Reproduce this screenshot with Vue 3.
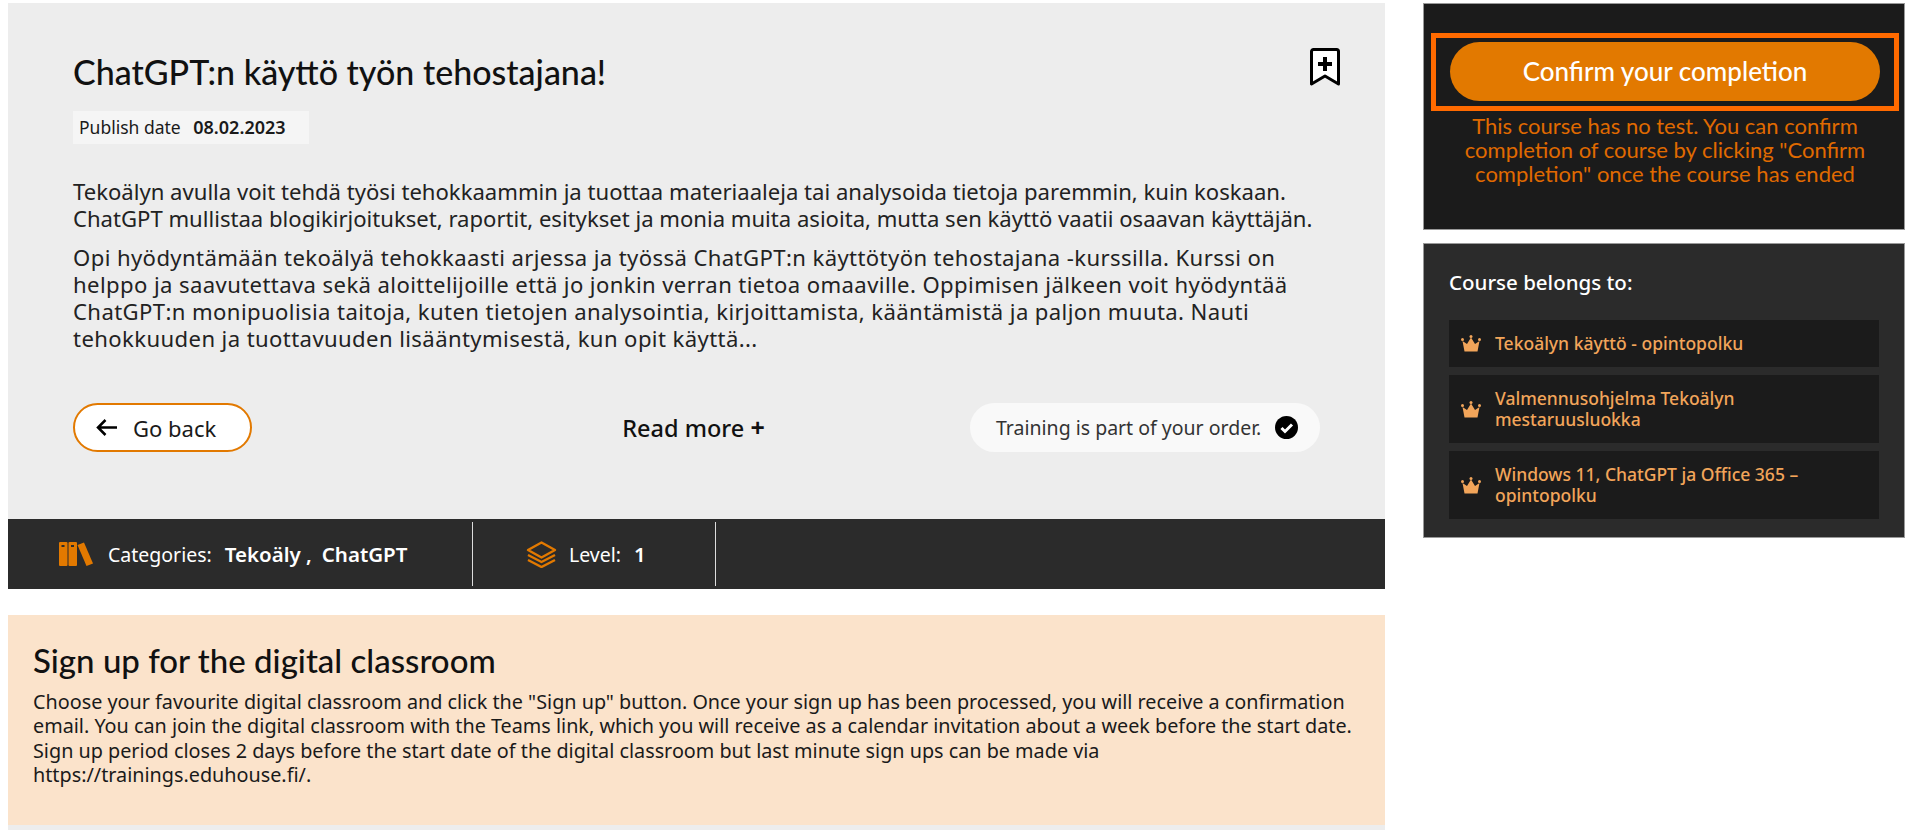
<template>
  <div class="page">
    <main class="main">
      <section class="course">
        <div class="course-body">
          <div class="head">
            <h1>ChatGPT:n käyttö työn tehostajana!</h1>
            <svg class="bookmark" width="32" height="39" viewBox="0 0 32 39">
              <path d="M2.500 3.500a2 2 0 0 1 2-2h23a2 2 0 0 1 2 2v32.500L16 28 2.500 36z" fill="#fff" stroke="#000" stroke-width="3" stroke-linejoin="round" />
              <path d="M14 9h4v5h5v4h-5v5h-4v-5H9v-4h5z" fill="#000" />
            </svg>
          </div>
          <div class="publish">Publish date <b>08.02.2023</b></div>
          <p class="lead">Tekoälyn avulla voit tehdä työsi tehokkaammin ja tuottaa materiaaleja tai analysoida tietoja paremmin, kuin koskaan. ChatGPT mullistaa blogikirjoitukset, raportit, esitykset ja monia muita asioita, mutta sen käyttö vaatii osaavan käyttäjän.</p>
          <p class="lead second">Opi hyödyntämään tekoälyä tehokkaasti arjessa ja työssä ChatGPT:n käyttötyön tehostajana -kurssilla. Kurssi on helppo ja saavutettava sekä aloittelijoille että jo jonkin verran tietoa omaaville. Oppimisen jälkeen voit hyödyntää ChatGPT:n monipuolisia taitoja, kuten tietojen analysointia, kirjoittamista, kääntämistä ja paljon muuta. Nauti tehokkuuden ja tuottavuuden lisääntymisestä, kun opit käyttä...</p>
          <div class="actions">
            <button class="back">
              <svg width="22" height="19" viewBox="0 0 22 19">
                <path d="M22 9.500H3M10.500 2 3 9.500l7.500 7.500" fill="none" stroke="#000" stroke-width="2.500" />
              </svg>
              Go back
            </button>
            <div class="more">Read more <span>+</span></div>
            <div class="ordered">
              Training is part of your order.
              <svg width="23" height="23" viewBox="0 0 23 23">
                <circle cx="11.500" cy="11.500" r="11.500" fill="#000" />
                <path d="m6.500 12 3.500 3.500 7-7" fill="none" stroke="#fff" stroke-width="3" />
              </svg>
            </div>
          </div>
        </div>
        <div class="meta">
          <div class="meta-cell cats">
            <svg width="34" height="24" viewBox="0 0 34 24">
              <rect x="0" y="0" width="8.500" height="24" rx="1" fill="#e27900" />
              <rect x="9.500" y="0" width="8.500" height="24" rx="1" fill="#e27900" />
              <path d="m18.500 3 6.500-2.500L34 21.500 27.500 24z" fill="#e27900" />
              <rect x="2.500" y="3" width="3" height="2" fill="#2b2b2b" />
              <rect x="12" y="3" width="3" height="2" fill="#2b2b2b" />
            </svg>
            <span>Categories:</span>
            <b>Tekoäly ,</b>
            <b>ChatGPT</b>
          </div>
          <div class="meta-cell level">
            <svg width="31" height="27" viewBox="0 0 31 27">
              <path d="M15.500 1.500 29 9l-13.500 7.500L2 9z" fill="none" stroke="#e27900" stroke-width="2.400" stroke-linejoin="round" />
              <path d="m2 14 13.500 7L29 14M2 19l13.500 7L29 19" fill="none" stroke="#e27900" stroke-width="2.400" />
            </svg>
            <span>Level:</span>
            <b>1</b>
          </div>
        </div>
      </section>

      <section class="signup">
        <h2>Sign up for the digital classroom</h2>
        <p>Choose your favourite digital classroom and click the "Sign up" button. Once your sign up has been processed, you will receive a confirmation email. You can join the digital classroom with the Teams link, which you will receive as a calendar invitation about a week before the start date. Sign up period closes 2 days before the start date of the digital classroom but last minute sign ups can be made via https://trainings.eduhouse.fi/.</p>
      </section>
      <div class="strip"></div>
    </main>

    <aside class="side">
      <section class="confirm">
        <div class="confirm-frame">
          <button class="confirm-btn">Confirm your completion</button>
        </div>
        <p>This course has no test. You can confirm completion of course by clicking "Confirm completion" once the course has ended</p>
      </section>
      <section class="belongs">
        <h3>Course belongs to:</h3>
        <a v-for="path in paths" :key="path" class="path">
          <svg width="20" height="17" viewBox="0 0 20 17">
            <path d="M3.500 16.500 1.500 6l4.500 3L10 2.500 14 9l4.500-3-2 10.500z" fill="#f2a55a" />
            <circle cx="1.500" cy="4.500" r="1.500" fill="#f2a55a" />
            <circle cx="10" cy="1.500" r="1.500" fill="#f2a55a" />
            <circle cx="18.500" cy="4.500" r="1.500" fill="#f2a55a" />
          </svg>
          <span>{{ path }}</span>
        </a>
      </section>
    </aside>
  </div>
</template>

<script setup>
const paths = [
  'Tekoälyn käyttö - opintopolku',
  'Valmennusohjelma Tekoälyn mestaruusluokka',
  'Windows 11, ChatGPT ja Office 365 – opintopolku'
]
</script>

<style>
html, body { margin: 0; background: #fff; overflow: hidden; }
</style>

<style scoped>
.page { display: flex; gap: 38px; padding: 3px 15px 0 8px; height: 827px; overflow: hidden; font-family: "Noto Sans", "Open Sans", sans-serif; color: #1a1a1a; }
.main { width: 1377px; flex: none; }
.side { flex: 1; }

.course-body { background: #ededed; height: 516px; box-sizing: border-box; padding: 48px 65px 0; }
.head { display: flex; justify-content: space-between; align-items: flex-start; }
h1 { margin: 0; font-family: Lato, sans-serif; font-size: 34px; font-weight: 500; line-height: 42px; color: #111; }
.bookmark { margin: -3px -21px 0 0; }
.publish { width: 236px; box-sizing: border-box; background: #f5f5f5; margin-top: 18px; padding-left: 6px; font-size: 17.500px; line-height: 33px; }
.publish b { margin-left: 8px; font-size: 18px; font-weight: 600; }
.lead { margin: 34px 0 0; font-size: 22.100px; line-height: 27px; color: #222; }
.second { margin-top: 12px; letter-spacing: 0.400px; }
.actions { display: flex; align-items: center; justify-content: space-between; margin-top: 51px; }
.back { display: flex; align-items: center; gap: 16px; width: 179px; height: 49px; box-sizing: border-box; padding: 0 0 0 20px; background: #fff; border: 2px solid #e27900; border-radius: 25px; font: inherit; font-size: 22px; color: #1a1a1a; }
.more { font-size: 23.500px; font-weight: 500; color: #111; margin-left: 165px; }
.more span { font-weight: 700; font-size: 25px; line-height: 20px; }
.ordered { display: flex; align-items: center; gap: 14px; width: 350px; height: 49px; box-sizing: border-box; padding-left: 26px; background: #f9f9f9; border-radius: 25px; font-size: 19.500px; color: #333; }

.meta { display: flex; height: 70px; background: #2b2b2b; color: #fff; align-items: stretch; font-size: 19.500px; }
.meta-cell { display: flex; align-items: center; margin: 3px 0; border-right: 1px solid #ddd; box-sizing: border-box; }
.meta-cell b { font-size: 20.500px; font-weight: 600; margin-left: 13px; }
.cats { width: 465px; padding-left: 51px; }
.cats svg { margin-right: 15px; }
.cats b + b { margin-left: 10px; }
.level { width: 243px; padding-left: 53px; }
.level svg { margin-right: 12px; }

.signup { margin-top: 26px; height: 210px; box-sizing: border-box; padding: 24px 15px 0 25px; background: #fbe3cb; }
h2 { margin: 0; font-family: Lato, sans-serif; font-size: 33px; font-weight: 500; line-height: 42px; color: #111; }
.signup p { margin: 9px 0 0; font-size: 19.800px; line-height: 24.300px; }
.strip { height: 6px; background: #ededed; }

.confirm { height: 227px; box-sizing: border-box; background: #1b1b1b; border: 1px solid #999; padding: 29px 5px 0 7px; text-align: center; }
.confirm-frame { box-sizing: border-box; border: 5px solid #ff6a00; padding: 4px 14px; height: 78px; }
.confirm-btn { display: block; width: 100%; height: 59px; padding-bottom: 3px; background: #e27900; border: 0; border-radius: 30px; color: #fff; font: inherit; font-family: Lato, sans-serif; font-size: 26px; font-weight: 500; }
.confirm p { margin: 3px 12px 0; font-family: Lato, sans-serif; font-size: 22px; line-height: 24px; color: #e06a00; }

.belongs { margin-top: 13px; height: 295px; box-sizing: border-box; background: #2b2b2b; border: 1px solid #999; padding: 23px 25px 0; }
h3 { margin: 0 0 23px; font-size: 20.500px; font-weight: 500; line-height: 30px; color: #fff; }
.path { display: flex; align-items: center; gap: 14px; padding: 13px 12px; margin-bottom: 8px; background: #1b1b1b; font-size: 17.500px; font-weight: 500; line-height: 21px; color: #f2a55a; }
.path svg { flex: none; }
</style>
